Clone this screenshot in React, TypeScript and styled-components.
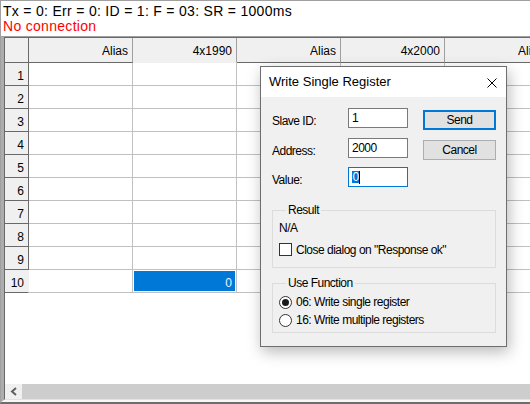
import { Fragment } from "react";
import styled, { createGlobalStyle } from "styled-components";

const GlobalStyle = createGlobalStyle`
  html, body {
    margin: 0;
    padding: 0;
    background: #ffffff;
  }
  body {
    font-family: "Liberation Sans", Arial, sans-serif;
    overflow: hidden;
  }
  * {
    box-sizing: border-box;
  }
`;

const columns = ["Alias", "4x1990", "Alias", "4x2000", "Alias"];
const rows = Array.from({ length: 10 }, (_, i) => i + 1);
const selected = { row: 10, col: 1 };

function App() {
  return (
    <>
      <GlobalStyle />
      <Window>
        <Status>
          <StatusLine>Tx = 0: Err = 0: ID = 1: F = 03: SR = 1000ms</StatusLine>
          <StatusLine $error>No connection</StatusLine>
        </Status>
        <GridFrame>
          <GridInner>
            <Grid>
              <Corner />
              {columns.map((name, i) => (
                <ColHeader key={i} $active={i === selected.col}>
                  {name}
                </ColHeader>
              ))}
              {rows.map((r) => (
                <Fragment key={r}>
                  <RowHeader $active={r === selected.row}>{r}</RowHeader>
                  {columns.map((_, c) => {
                    const isSel = r === selected.row && c === selected.col;
                    return (
                      <Cell key={c} $selected={isSel}>
                        {isSel ? "0" : ""}
                      </Cell>
                    );
                  })}
                </Fragment>
              ))}
            </Grid>
            <Spacer />
            <HScroll>
              <ScrollArrow>
                <svg width="8" height="9" viewBox="0 0 8 9">
                  <polyline
                    points="6,1 2,4.5 6,8"
                    fill="none"
                    stroke="#606060"
                    strokeWidth="2"
                  />
                </svg>
              </ScrollArrow>
              <ScrollThumb />
            </HScroll>
          </GridInner>
        </GridFrame>

        <Dialog>
          <TitleBar>
            <Title>Write Single Register</Title>
            <CloseButton>
              <svg width="10" height="10" viewBox="0 0 10 10">
                <path d="M0.5 0.5 L9.5 9.5 M9.5 0.5 L0.5 9.5" stroke="#000" strokeWidth="1" />
              </svg>
            </CloseButton>
          </TitleBar>
          <DialogBody>
            <FormArea>
              <Fields>
                <FieldRow>
                  <Label>Slave ID:</Label>
                  <TextBox>1</TextBox>
                </FieldRow>
                <FieldRow>
                  <Label>Address:</Label>
                  <TextBox>2000</TextBox>
                </FieldRow>
                <FieldRow>
                  <Label>Value:</Label>
                  <TextBox $focused>
                    <Selection>0</Selection>
                    <Caret />
                  </TextBox>
                </FieldRow>
              </Fields>
              <Buttons>
                <Button $default>Send</Button>
                <Button>Cancel</Button>
              </Buttons>
            </FormArea>

            <Group>
              <Legend>Result</Legend>
              <ResultText>N/A</ResultText>
              <OptionRow $spaced>
                <CheckBox />
                <span>Close dialog on "Response ok"</span>
              </OptionRow>
            </Group>

            <Group $compact>
              <Legend>Use Function</Legend>
              <OptionRow>
                <Radio $checked />
                <span>06: Write single register</span>
              </OptionRow>
              <OptionRow $gap>
                <Radio />
                <span>16: Write multiple registers</span>
              </OptionRow>
            </Group>
          </DialogBody>
        </Dialog>
      </Window>
    </>
  );
}

const Window = styled.div`
  position: relative;
  width: 100%;
  height: 404px;
  display: flex;
  flex-direction: column;
  border-top: 1px solid #a0a0a0;
  border-left: 1px solid #a0a0a0;
  border-bottom: 2px solid #6d6d6d;
  background: #fff;
`;

const Status = styled.div`
  height: 36px;
  padding: 3px 0 0 2px;
  border-bottom: 1px solid #a0a0a0;
  background: #fff;
`;

const StatusLine = styled.div<{ $error?: boolean }>`
  font-size: 14px;
  line-height: 15px;
  letter-spacing: 0.3px;
  white-space: nowrap;
  color: ${({ $error }) => ($error ? "#ff0000" : "#000")};
`;

const GridFrame = styled.div`
  flex: 1;
  display: flex;
  flex-direction: column;
  border-left: 3px solid #adadad;
  border-bottom: 2px solid #f7f7f7;
`;

const GridInner = styled.div`
  flex: 1;
  display: flex;
  flex-direction: column;
  overflow: hidden;
  border-top: 1px solid #696969;
  border-left: 1px solid #696969;
  border-bottom: 1px solid #e3e3e3;
`;

const Grid = styled.div`
  display: grid;
  grid-template-columns: 24px repeat(5, 104px);
  grid-template-rows: 25px repeat(10, 23px);
  font-size: 12px;
  color: #000;
`;

const Corner = styled.div`
  background: #f0f0f0;
  border-right: 1px solid #696969;
  border-bottom: 1px solid #696969;
`;

const ColHeader = styled.div<{ $active?: boolean }>`
  background: #f0f0f0;
  text-align: right;
  padding: 2px 4px 0 0;
  line-height: 22px;
  white-space: nowrap;
  border-right: 1px solid #a0a0a0;
  border-bottom: 1px solid ${({ $active }) => ($active ? "#f0f0f0" : "#696969")};
`;

const RowHeader = styled.div<{ $active?: boolean }>`
  background: #f0f0f0;
  text-align: right;
  padding: 3px 4px 0 0;
  line-height: 20px;
  border-bottom: 1px solid #696969;
  border-right: 1px solid ${({ $active }) => ($active ? "#f0f0f0" : "#696969")};
`;

const Cell = styled.div<{ $selected?: boolean }>`
  text-align: right;
  padding: 3px 4px 0 0;
  line-height: 20px;
  border-right: 1px solid #c0c0c0;
  border-bottom: 1px solid #c0c0c0;
  background: ${({ $selected }) => ($selected ? "#0078d7" : "#fff")};
  color: ${({ $selected }) => ($selected ? "#eef6ff" : "#000")};
  box-shadow: ${({ $selected }) => ($selected ? "inset 0 0 0 1px #fff" : "none")};
`;

const Spacer = styled.div`
  flex: 1;
  background: #fff;
`;

const HScroll = styled.div`
  height: 15px;
  display: flex;
`;

const ScrollArrow = styled.div`
  width: 17px;
  background: #f0f0f0;
  display: flex;
  align-items: center;
  justify-content: center;
`;

const ScrollThumb = styled.div`
  flex: 1;
  background: #cdcdcd;
`;

const Dialog = styled.div`
  position: absolute;
  left: 259px;
  top: 65px;
  width: 247px;
  height: 281px;
  display: flex;
  flex-direction: column;
  background: #f0f0f0;
  border: 1px solid #6e6e6e;
  box-shadow: 2px 5px 14px rgba(0, 0, 0, 0.28);
  font-size: 12px;
  letter-spacing: -0.5px;
  color: #000;
`;

const TitleBar = styled.div`
  height: 30px;
  display: flex;
  align-items: center;
  justify-content: space-between;
  padding: 0 9px 0 8px;
  background: #fff;
`;

const Title = styled.span`
  font-size: 13px;
  letter-spacing: 0;
  line-height: 30px;
`;

const CloseButton = styled.span`
  display: flex;
  align-items: center;
  margin-top: 2px;
`;

const DialogBody = styled.div`
  flex: 1;
  padding: 11px 10px 0 11px;
`;

const FormArea = styled.div`
  display: flex;
`;

const Fields = styled.div`
  display: flex;
  flex-direction: column;
  gap: 9.5px;
`;

const FieldRow = styled.div`
  height: 20px;
  display: flex;
  align-items: center;
`;

const Label = styled.span`
  width: 76px;
  margin-top: 6px;
`;

const TextBox = styled.div<{ $focused?: boolean }>`
  width: 60px;
  height: 20px;
  padding: 0 3px;
  display: flex;
  align-items: center;
  background: #fff;
  border: 1px solid ${({ $focused }) => ($focused ? "#0078d7" : "#7a7a7a")};
  line-height: 14px;
`;

const Selection = styled.span`
  background: #0078d7;
  color: #fff;
  line-height: 12px;
  padding: 0 0.5px;
`;

const Caret = styled.span`
  width: 1px;
  height: 13px;
  background: #000;
`;

const Buttons = styled.div`
  margin: 2px 0 0 15px;
  display: flex;
  flex-direction: column;
  gap: 10px;
`;

const Button = styled.div<{ $default?: boolean }>`
  width: 73px;
  height: 20px;
  display: flex;
  align-items: center;
  justify-content: center;
  background: #e1e1e1;
  border: ${({ $default }) => ($default ? "2px solid #0078d7" : "1px solid #adadad")};
`;

const Group = styled.fieldset<{ $compact?: boolean }>`
  margin: ${({ $compact }) => ($compact ? "9px 0 0" : "16.5px 0 0")};
  padding: ${({ $compact }) => ($compact ? "6px 6px 5px" : "4px 6px 10px")};
  min-width: 0;
  border: 1px solid #dcdcdc;
`;

const Legend = styled.legend`
  margin-left: 7px;
  padding: 0 2px;
  line-height: 13px;
`;

const ResultText = styled.div`
  line-height: 14px;
`;

const OptionRow = styled.div<{ $spaced?: boolean; $gap?: boolean }>`
  display: flex;
  align-items: center;
  gap: 4px;
  height: ${({ $spaced }) => ($spaced ? "14px" : "13px")};
  margin-top: ${({ $spaced, $gap }) => ($spaced ? "8px" : $gap ? "5px" : "0")};
  white-space: nowrap;
`;

const CheckBox = styled.span`
  width: 13px;
  height: 13px;
  flex: none;
  background: #fff;
  border: 1px solid #333;
`;

const Radio = styled.span<{ $checked?: boolean }>`
  width: 13px;
  height: 13px;
  flex: none;
  border-radius: 50%;
  background: #fff;
  border: 1px solid #333;
  display: flex;
  align-items: center;
  justify-content: center;
  &::after {
    content: "";
    width: 7px;
    height: 7px;
    border-radius: 50%;
    background: ${({ $checked }) => ($checked ? "#1a1a1a" : "transparent")};
  }
`;

export default App;
